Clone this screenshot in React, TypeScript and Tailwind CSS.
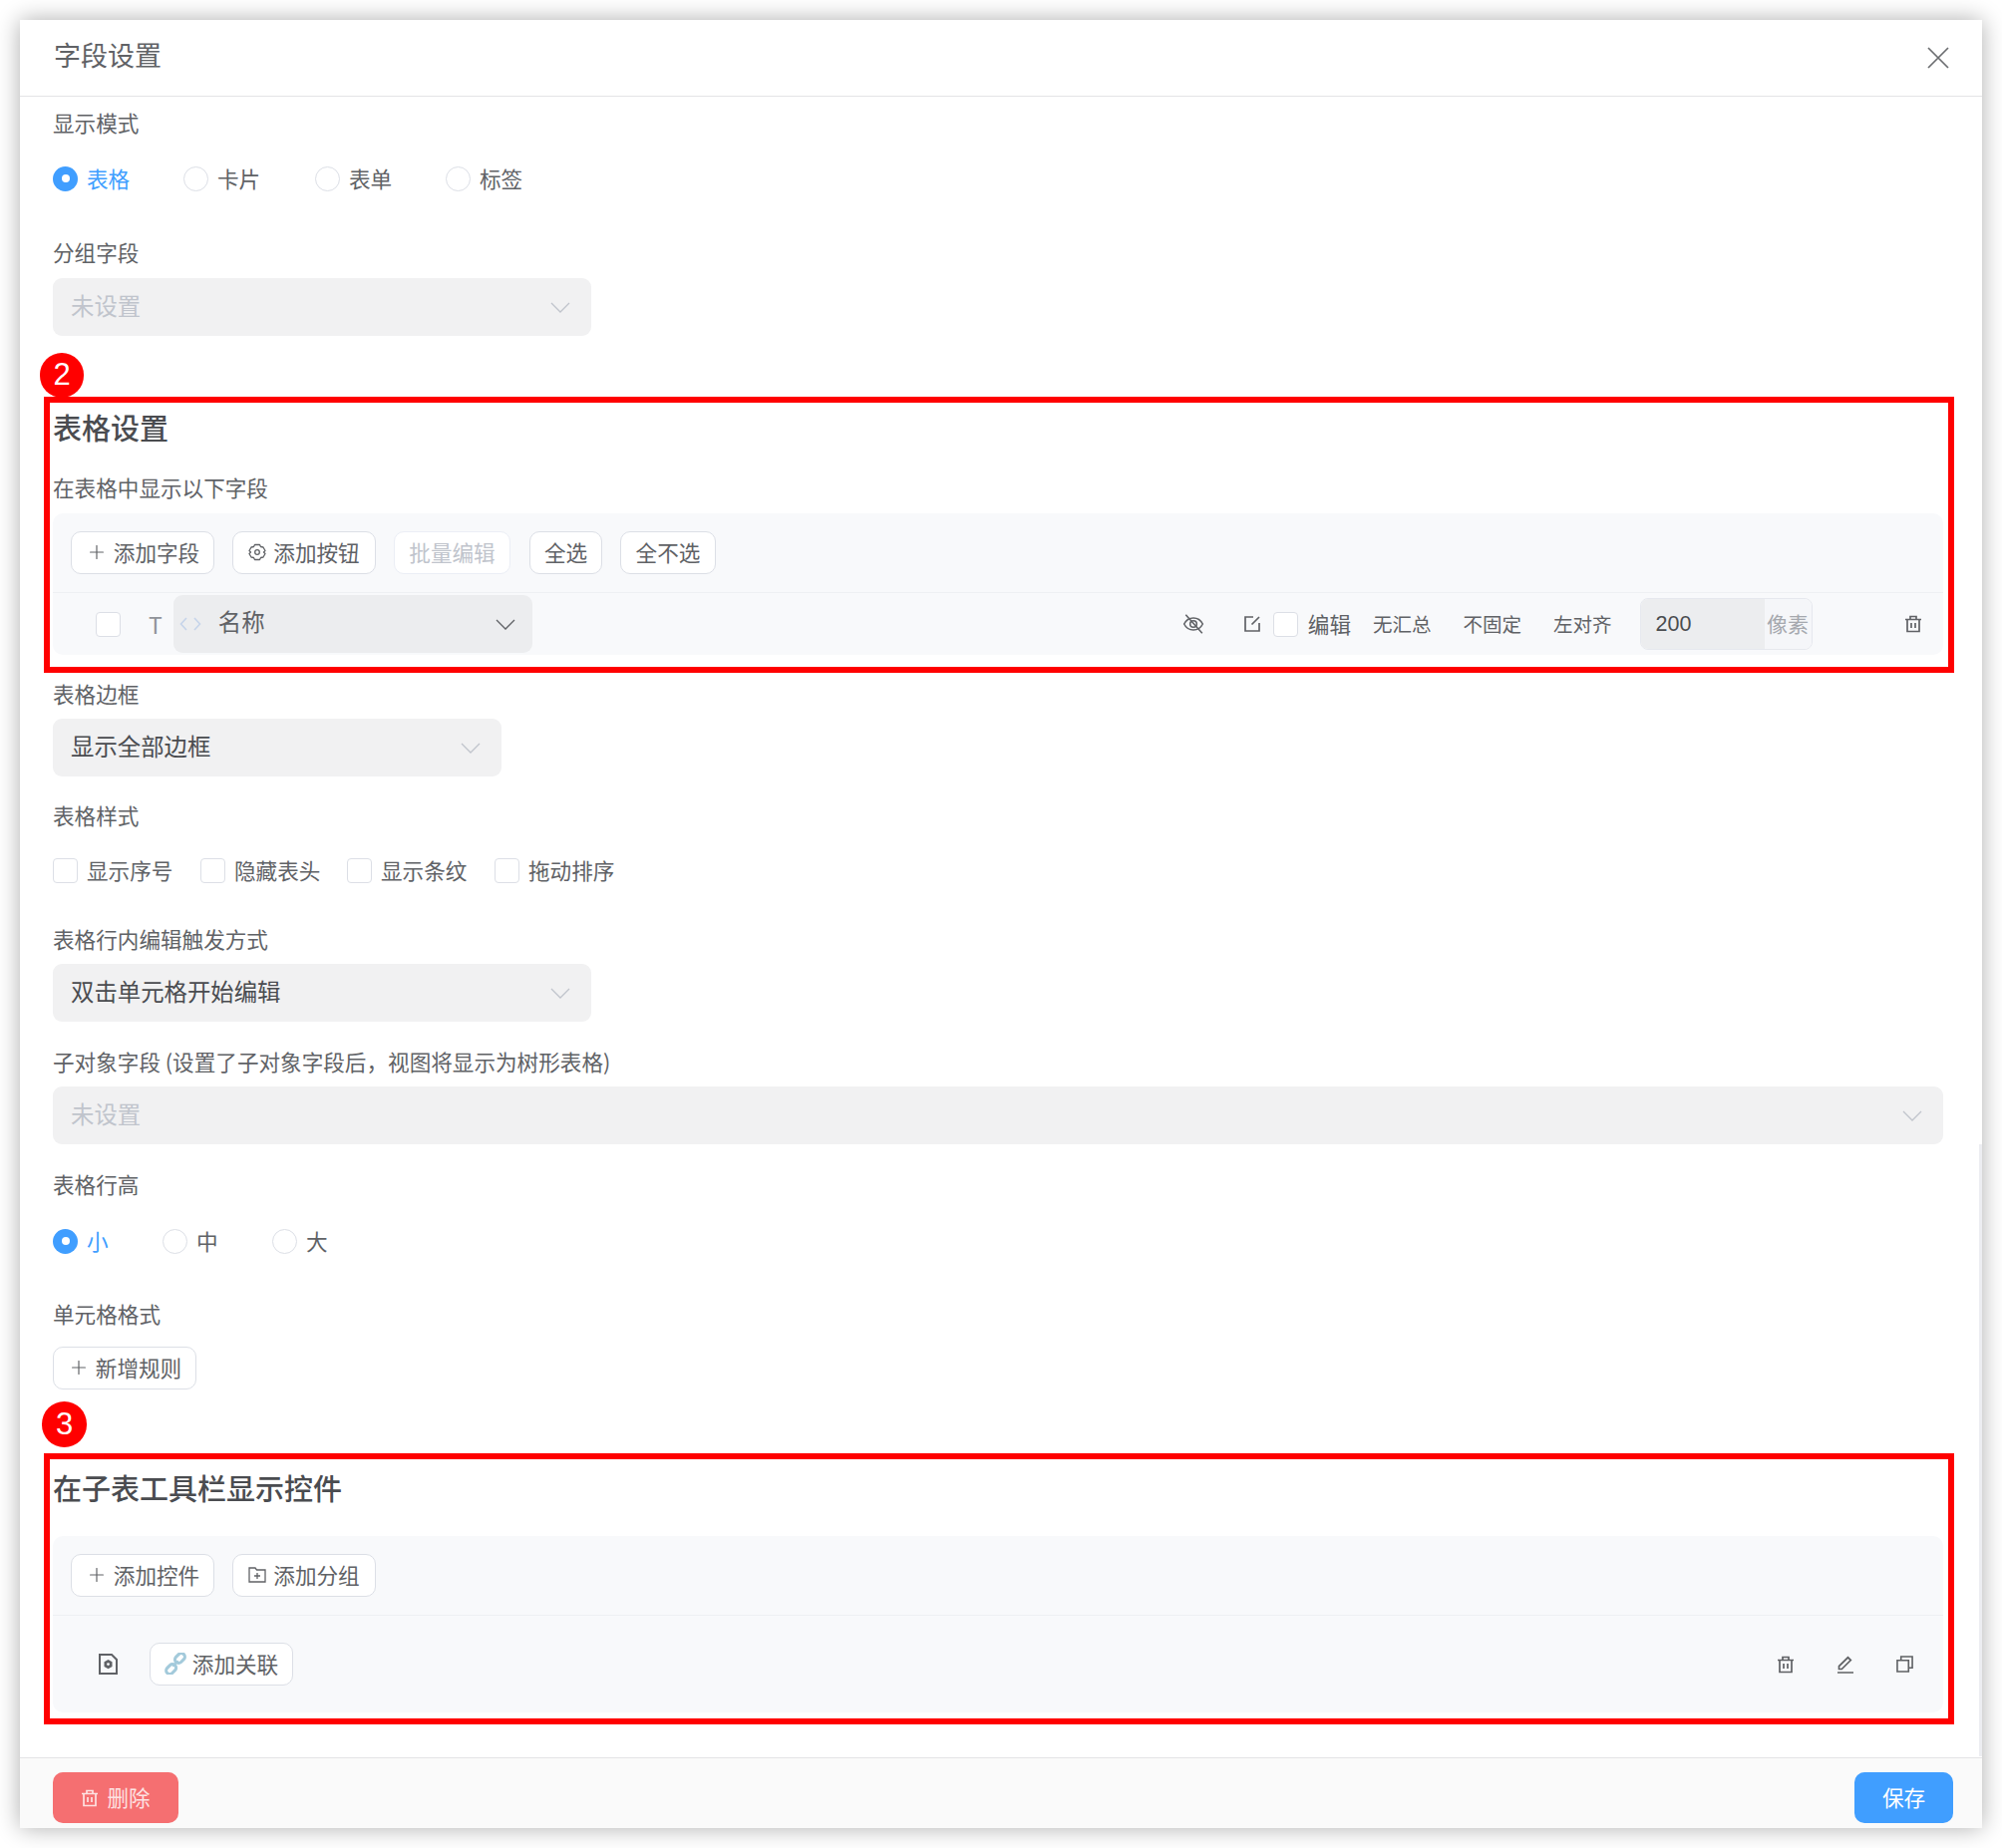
import React from "react"
import { Plus } from "lucide-react"

const stroke = { fill: "none", stroke: "currentColor", strokeWidth: 1.7 }

function TrashIcon({ className }: { className?: string }) {
  return (
    <svg viewBox="0 0 18 18" className={className} {...stroke}>
      <path d="M1 4.500h16M6 4.500V1.500h6v3M3 4.500v12h12v-12M7 8v5M11 8v5" />
    </svg>
  )
}

function EyeOffIcon() {
  return (
    <svg viewBox="0 0 20 20" className="w-[22px] h-[22px]" {...stroke} strokeWidth={1.4}>
      <path d="M1.500 10c2-4 5-5.500 8.500-5.500s6.500 1.500 8.500 5.500c-2 4-5 5.500-8.500 5.500S3.500 14 1.500 10z" />
      <circle cx="10" cy="10" r="3" />
      <path d="M3 1.500l15 17" />
    </svg>
  )
}

function EditBoxIcon() {
  return (
    <svg viewBox="0 0 18 18" className="w-[18px] h-[18px]" {...stroke}>
      <path d="M10 2H2v14h14V8M8.500 9.500L16 2" />
    </svg>
  )
}

function PenIcon() {
  return (
    <svg viewBox="0 0 18 18" className="w-[18px] h-[18px]" {...stroke}>
      <path d="M1 17h16M2.500 13.500v-2.800L11.500 1.800l2.800 2.800-9 8.900z" />
    </svg>
  )
}

function CopyIcon() {
  return (
    <svg viewBox="0 0 18 18" className="w-[17px] h-[17px]" {...stroke}>
      <path d="M1 5h12v12H1zM5 5V1h12v12h-4" />
    </svg>
  )
}

function GearIcon() {
  return (
    <svg viewBox="0 0 18 18" className="w-[18px] h-[18px]" {...stroke} strokeWidth={1.3} strokeLinejoin="round">
      <path d="M6.500 1.500h5l1 2 2.500.5 2 3.500-1.500 1.500 1.500 1.500-2 3.500-2.500.5-1 2h-5l-1-2-2.500-.5-2-3.500L2.500 9 1 7.500 3 4l2.500-.5z" />
      <circle cx="9" cy="9" r="2.300" />
    </svg>
  )
}

function FolderPlusIcon() {
  return (
    <svg viewBox="0 0 18 16" className="w-[18px] h-[16px]" {...stroke} strokeWidth={1.3}>
      <path d="M1 15V1h6l1.500 2H17v12zM9 6v6M6 9h6" />
    </svg>
  )
}

function FileGearIcon() {
  return (
    <svg viewBox="0 0 19 21" className="w-[19px] h-[21px]">
      <path d="M1 1h12l5 5v14H1z" fill="none" stroke="#606266" strokeWidth="2" />
      <path d="M9.500 6l4 2.300v4.600l-4 2.300-4-2.300V8.300z" fill="#606266" />
      <circle cx="9.500" cy="10.600" r="1.400" fill="#f8f9fb" />
    </svg>
  )
}

function LinkIcon() {
  return (
    <svg viewBox="0 0 20 20" className="w-[22px] h-[22px]" fill="none" stroke="#a3cadb" strokeWidth="2.800">
      <rect x="9" y="1.800" width="10" height="6.500" rx="3.200" transform="rotate(-45 14 5)" />
      <rect x="1" y="11.800" width="10" height="6.500" rx="3.200" transform="rotate(-45 6 15)" />
      <path d="M7.500 12.500l5-5" strokeWidth="2" />
    </svg>
  )
}

function CodeIcon() {
  return (
    <svg viewBox="0 0 22 14" className="w-[22px] h-[14px]" fill="none" stroke="#c6d4ea" strokeWidth="1.600">
      <path d="M7 1L1.500 7 7 13M15 1l5.500 6L15 13" />
    </svg>
  )
}

function Chevron({ className }: { className?: string }) {
  return (
    <svg viewBox="0 0 20 11" className={`w-[20px] h-[11px] ${className ?? ""}`} fill="none" stroke="currentColor" strokeWidth="1.300">
      <path d="M1 1l9 9 9-9" />
    </svg>
  )
}

function Label({ className, children }: { className?: string; children: React.ReactNode }) {
  return <div className={`h-[30px] leading-[28px] text-[21.6px] text-[#606266] ${className ?? ""}`}>{children}</div>
}

function Select({ value, placeholder, className }: { value: string; placeholder?: boolean; className?: string }) {
  return (
    <div className={`h-[58px] rounded-[9px] bg-[#f1f1f2] flex items-center justify-between pl-[18px] pr-[21px] text-[23.4px] ${placeholder ? "text-[#c0c4cc]" : "text-[#4a4c50]"} ${className ?? ""}`}>
      <span className="pb-[3px]">{value}</span>
      <Chevron className="text-[#c0c4cc]" />
    </div>
  )
}

function Radio({ label, checked, className }: { label: string; checked?: boolean; className?: string }) {
  return (
    <div className={`flex items-center h-[30px] ${className ?? ""}`}>
      {checked ? (
        <span className="w-[25px] h-[25px] rounded-full bg-[#409eff] flex items-center justify-center">
          <span className="w-[8px] h-[8px] rounded-full bg-white" />
        </span>
      ) : (
        <span className="w-[25px] h-[25px] rounded-full border border-[#dcdfe6] bg-white" />
      )}
      <span className={`ml-[9px] pt-[1px] text-[21.6px] ${checked ? "text-[#409eff]" : "text-[#606266]"}`}>{label}</span>
    </div>
  )
}

function Checkbox({ label, className }: { label: string; className?: string }) {
  return (
    <div className={`flex items-center h-[30px] ${className ?? ""}`}>
      <span className="w-[25px] h-[25px] rounded-[4px] border border-[#dcdfe6] bg-white" />
      <span className="ml-[9px] text-[21.6px] text-[#606266]">{label}</span>
    </div>
  )
}

function Btn({ className, children }: { className?: string; children: React.ReactNode }) {
  return (
    <div className={`h-[43px] rounded-[10px] border border-[#dcdfe6] bg-white flex items-center justify-center gap-[6px] pb-[1px] text-[21.6px] text-[#606266] shrink-0 ${className ?? ""}`}>
      {children}
    </div>
  )
}

function AddIcon() {
  return <Plus className="w-[22px] h-[22px]" strokeWidth={1.300} />
}

function RedBox({ className }: { className: string }) {
  return <div className={`absolute border-[6px] border-[#ff0000] pointer-events-none ${className}`} />
}

function Badge({ n, className }: { n: string; className: string }) {
  return (
    <div className={`absolute rounded-full bg-[#ff0000] text-white flex items-center justify-center text-[31px] font-['Liberation_Sans',sans-serif] ${className}`}>
      {n}
    </div>
  )
}

export default function App() {
  return (
    <div className="w-[2008px] h-[1854px] bg-white p-[20px] font-['Noto_Sans_CJK_SC',sans-serif]">
      <div className="relative w-[1968px] h-[1814px] bg-white flex flex-col shadow-[0_0_22px_rgba(0,0,0,0.32)]">
        <div className="h-[77px] shrink-0 border-b border-[#e4e4e6] flex items-center justify-between pl-[34px] pr-[33px]">
          <span className="text-[27px] text-[#606266] pb-[5px]">字段设置</span>
          <svg viewBox="0 0 22 22" className="w-[22px] h-[22px] text-[#6b6d70]" fill="none" stroke="currentColor" strokeWidth="1.700">
            <path d="M1 1l20 20M21 1L1 21" />
          </svg>
        </div>

        <div className="flex-1 min-h-0 pt-[12px] pl-[33px] pr-[39px]">
          <Label>显示模式</Label>
          <div className="flex mt-[25px]">
            <Radio label="表格" checked className="w-[131px]" />
            <Radio label="卡片" className="w-[132px]" />
            <Radio label="表单" className="w-[131px]" />
            <Radio label="标签" />
          </div>

          <Label className="mt-[45px]">分组字段</Label>
          <Select value="未设置" placeholder className="mt-[10px] w-[540px]" />

          <section className="relative mt-[72px]">
            <RedBox className="-left-[9px] -right-[11px] -top-[11px] -bottom-[18px]" />
            <Badge n="2" className="-left-[13px] -top-[55px] w-[44px] h-[45px]" />
            <h2 className="h-[40px] leading-[38px] text-[29px] font-medium text-[#4a4c50]">表格设置</h2>
            <Label className="mt-[26px]">在表格中显示以下字段</Label>
            <div className="mt-[10px] rounded-[10px] bg-[#f8f9fb]">
              <div className="h-[80px] border-b border-[#eef0f3] flex items-center gap-[18px] pl-[18px]">
                <Btn className="w-[144px]"><AddIcon />添加字段</Btn>
                <Btn className="w-[144px] gap-[7px]"><GearIcon />添加按钮</Btn>
                <Btn className="w-[117px] border-[#ebeef5] text-[#c0c4cc]">批量编辑</Btn>
                <Btn className="w-[73px] ml-[1px] text-[#4a4c50]">全选</Btn>
                <Btn className="w-[96px] text-[#4a4c50]">全不选</Btn>
              </div>
              <div className="h-[62px] flex items-center text-[19.5px] text-[#606266]">
                <span className="ml-[43px] w-[25px] h-[25px] rounded-[4px] border border-[#dcdfe6] bg-white" />
                <span className="ml-[28px] text-[23px] text-[#909399]">T</span>
                <div className="ml-[11px] w-[360px] h-[58px] rounded-[9px] bg-[#ecedef] flex items-center pl-[6px] pr-[17px]">
                  <CodeIcon />
                  <span className="ml-[17px] pb-[5px] text-[23.4px] text-[#606266]">名称</span>
                  <Chevron className="ml-auto text-[#606266]" />
                </div>
                <span className="ml-[652px]"><EyeOffIcon /></span>
                <span className="ml-[39px]"><EditBoxIcon /></span>
                <span className="ml-[12px] w-[25px] h-[25px] rounded-[4px] border border-[#dcdfe6] bg-white" />
                <span className="ml-[10px] text-[21.6px]">编辑</span>
                <span className="ml-[22px]">无汇总</span>
                <span className="ml-[32px]">不固定</span>
                <span className="ml-[32px]">左对齐</span>
                <div className="ml-[28px] w-[173px] h-[52px] rounded-[8px] flex overflow-hidden border border-[#e6e8ee]">
                  <div className="w-[124px] bg-[#ecedef] flex items-center pl-[15px] text-[21.5px] font-['Liberation_Sans',sans-serif] text-[#4a4c50]">200</div>
                  <div className="flex-1 bg-[#f5f6f9] flex items-center justify-center text-[21px] text-[#a5a8ae]">像素</div>
                </div>
                <span className="ml-auto mr-[21px] text-[#606266]"><TrashIcon className="w-[18px] h-[18px]" /></span>
              </div>
            </div>
          </section>

          <Label className="mt-[25px]">表格边框</Label>
          <Select value="显示全部边框" className="mt-[9px] w-[450px]" />

          <Label className="mt-[25px]">表格样式</Label>
          <div className="flex mt-[24px]">
            <Checkbox label="显示序号" className="w-[148px]" />
            <Checkbox label="隐藏表头" className="w-[147px]" />
            <Checkbox label="显示条纹" className="w-[148px]" />
            <Checkbox label="拖动排序" />
          </div>

          <Label className="mt-[40px]">表格行内编辑触发方式</Label>
          <Select value="双击单元格开始编辑" className="mt-[9px] w-[540px]" />

          <Label className="mt-[26px]">子对象字段 (设置了子对象字段后，视图将显示为树形表格)</Label>
          <Select value="未设置" placeholder className="mt-[9px]" />

          <Label className="mt-[26px]">表格行高</Label>
          <div className="flex mt-[26px]">
            <Radio label="小" checked className="w-[110px]" />
            <Radio label="中" className="w-[110px]" />
            <Radio label="大" />
          </div>

          <Label className="mt-[44px]">单元格格式</Label>
          <Btn className="mt-[17px] w-[144px]"><AddIcon />新增规则</Btn>

          <section className="relative mt-[80px]">
            <RedBox className="-left-[9px] -right-[11px] -top-[16px] -bottom-[12px]" />
            <Badge n="3" className="-left-[11px] -top-[68px] w-[45px] h-[46px]" />
            <h2 className="h-[40px] leading-[36px] text-[29px] font-medium text-[#4a4c50]">在子表工具栏显示控件</h2>
            <div className="mt-[27px] rounded-[10px] bg-[#f8f9fb]">
              <div className="h-[80px] border-b border-[#eef0f3] flex items-center gap-[18px] pl-[18px]">
                <Btn className="w-[144px]"><AddIcon />添加控件</Btn>
                <Btn className="w-[144px] gap-[7px]"><FolderPlusIcon />添加分组</Btn>
              </div>
              <div className="h-[97px] flex items-center">
                <span className="ml-[46px]"><FileGearIcon /></span>
                <Btn className="ml-[32px] w-[144px] gap-[5px]"><LinkIcon />添加关联</Btn>
                <div className="ml-auto flex items-center gap-[42px] pr-[30px] text-[#5f6164]">
                  <TrashIcon className="w-[18px] h-[18px]" />
                  <PenIcon />
                  <CopyIcon />
                </div>
              </div>
            </div>
          </section>
        </div>

        <div className="h-[71px] shrink-0 border-t border-[#e4e4e6] bg-[#fafafa] flex items-center justify-between pt-[9px] pl-[33px] pr-[29px]">
          <div className="w-[126px] h-[51px] rounded-[10px] bg-[#f56f71] text-[#fde2e2] flex items-center justify-center gap-[8px] text-[21.6px]">
            <TrashIcon className="w-[18px] h-[18px]" />
            删除
          </div>
          <div className="w-[99px] h-[51px] rounded-[10px] bg-[#409eff] text-white flex items-center justify-center text-[21.6px]">保存</div>
        </div>

        <div className="absolute right-0 top-[1128px] w-[3px] h-[614px] bg-[#ecedf1]" />
      </div>
    </div>
  )
}
